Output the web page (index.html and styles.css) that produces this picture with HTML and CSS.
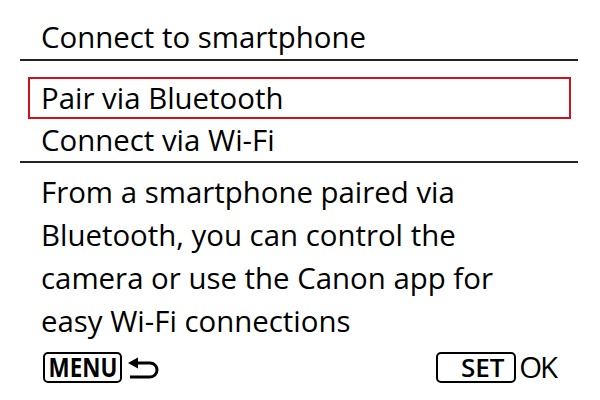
FILE: index.html
```html
<!DOCTYPE html>
<html lang="en">
<head>
<meta charset="utf-8">
<title>Connect to smartphone</title>
<link rel="stylesheet" href="styles.css">
</head>
<body>
<div class="screen">
  <div class="title">Connect to smartphone</div>
  <div class="options">
    <div class="opt sel">Pair via Bluetooth</div>
    <div class="opt">Connect via Wi-Fi</div>
  </div>
  <p class="desc">From a smartphone paired via<br>Bluetooth, you can control the<br>camera or use the Canon app for<br>easy Wi-Fi connections</p>
  <div class="footer">
    <div class="group">
      <span class="key menu"><span class="narrow">MENU</span></span>
      <svg class="back" width="34" height="24" viewBox="0 0 34 24">
        <polygon points="1,6 11,0.5 11,11.5" fill="#000"/>
        <path d="M10 6 H23 A7 7 0 0 1 23 20 H3" fill="none" stroke="#000" stroke-width="3"/>
      </svg>
    </div>
    <div class="group">
      <span class="key set">SET</span>
      <span class="ok">OK</span>
    </div>
  </div>
</div>
</body>
</html>
```
FILE: styles.css
```css
html, body {
  margin: 0;
  padding: 0;
  background: #fff;
}
body {
  font-family: "Open Sans", "Noto Sans", sans-serif;
  font-size: 29.4px;
  color: #000;
}
.screen {
  width: 600px;
  height: 400px;
  overflow: hidden;
}
.title {
  margin: 0 22px 0 20px;
  padding: 18px 0 3px 21px;
  line-height: 38px;
  border-bottom: 2px solid #222;
}
.options {
  margin: 16px 22px 0 20px;
  border-bottom: 2px solid #222;
}
.opt {
  padding-left: 21px;
  line-height: 42px;
}
.opt.sel {
  margin: 0 7px 0 8px;
  padding-left: 11px;
  line-height: 38px;
  border: 2px solid #d0101c;
}
.desc {
  margin: 8px 0 0 41px;
  line-height: 43px;
}
.footer {
  margin-top: 9px;
  display: flex;
  justify-content: space-between;
  padding: 0 42px 0 43px;
}
.group {
  display: flex;
  align-items: center;
}
.key {
  box-sizing: border-box;
  height: 31px;
  border: 2px solid #000;
  border-radius: 5px;
  font-weight: 700;
  font-size: 26px;
  line-height: 27px;
  display: flex;
  align-items: center;
  justify-content: center;
}
.key.menu {
  width: 79px;
}
.narrow {
  display: inline-block;
  transform: scaleX(0.86);
}
.key.set {
  width: 80px;
  padding-left: 13px;
  font-weight: 600;
}
.back {
  margin-left: 5px;
  margin-top: 2px;
}
.ok {
  margin-left: 3px;
  margin-right: 2px;
  letter-spacing: -2px;
  line-height: 31px;
}
```
